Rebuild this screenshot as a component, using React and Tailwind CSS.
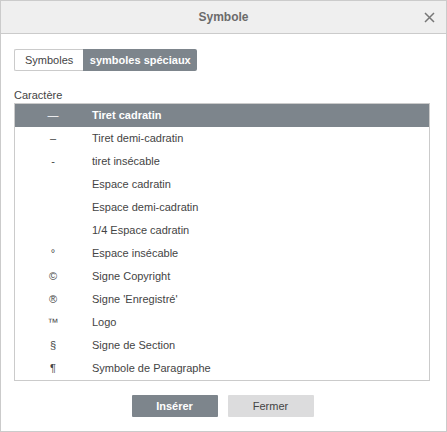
import React, { useState } from 'react';

const items = [
  ['—', 'Tiret cadratin'],
  ['–', 'Tiret demi-cadratin'],
  ['-', 'tiret insécable'],
  ['', 'Espace cadratin'],
  ['', 'Espace demi-cadratin'],
  ['', '1/4 Espace cadratin'],
  ['°', 'Espace insécable'],
  ['©\uFE0E', 'Signe Copyright'],
  ['®\uFE0E', "Signe 'Enregistré'"],
  ['™\uFE0E', 'Logo'],
  ['§', 'Signe de Section'],
  ['¶', 'Symbole de Paragraphe'],
];

export default function App() {
  const [selected, setSelected] = useState(0);
  const [tab, setTab] = useState(1);

  return (
    <div className="w-[447px] h-[432px] bg-white border border-[#cbcbcb] flex flex-col text-[11px] text-[#444] font-['Liberation_Sans',Arial,sans-serif]">
      <div className="h-[33px] shrink-0 bg-[#efefef] border-b border-[#cbcbcb] flex items-center justify-center relative">
        <span className="text-[12px] font-bold text-[#6b6b6b]">Symbole</span>
        <button className="absolute right-[11px] top-[10px] w-[12px] h-[12px] flex items-center justify-center">
          <svg width="11" height="11" viewBox="0 0 11 11">
            <path d="M1 1L10 10M10 1L1 10" stroke="#777" strokeWidth="1.5" />
          </svg>
        </button>
      </div>

      <div className="px-[13px] pt-[15px] flex flex-col flex-1">
        <div className="flex h-[22px]">
          <button
            onClick={() => setTab(0)}
            className={`px-[10px] h-full rounded-l-[2px] ${tab === 0 ? 'bg-[#7d858c] text-white font-bold' : 'bg-white border border-r-0 border-[#cbcbcb]'}`}
          >
            Symboles
          </button>
          <button
            onClick={() => setTab(1)}
            className={`w-[114px] h-full rounded-r-[2px] ${tab === 1 ? 'bg-[#7d858c] text-white font-bold' : 'bg-white border border-[#cbcbcb]'}`}
          >
            symboles spéciaux
          </button>
        </div>

        <div className="mt-[18px] leading-[13px]">Caractère</div>
        <div className="mt-[1px] w-[416px] border border-[#cbcbcb]">
          {items.map(([sym, name], i) => (
            <div
              key={name}
              onClick={() => setSelected(i)}
              className={`h-[23px] flex items-center ${selected === i ? 'bg-[#7d858c] text-white font-bold' : ''}`}
            >
              <span className="w-[77px] pr-[1px] text-center font-normal">{sym}</span>
              <span>{name}</span>
            </div>
          ))}
        </div>

        <div className="flex justify-center gap-[10px] mt-[14px] pr-[2px]">
          <button className="w-[86px] h-[22px] bg-[#7d858c] text-white font-bold rounded-[1px]">Insérer</button>
          <button className="w-[86px] h-[22px] bg-[#dcdcdd] text-[#444] rounded-[1px]">Fermer</button>
        </div>
      </div>
    </div>
  );
}
